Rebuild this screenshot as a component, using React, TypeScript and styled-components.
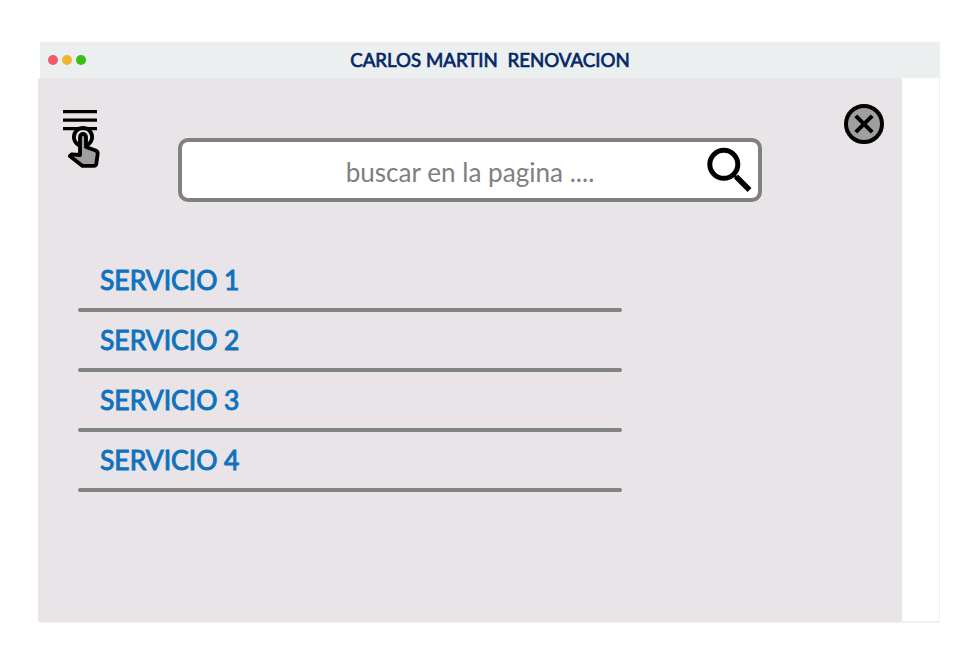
import React from "react";
import styled, { createGlobalStyle } from "styled-components";

const GlobalStyle = createGlobalStyle`
  * { box-sizing: border-box; }
  body { margin: 0; background: #fff; font-family: Lato, sans-serif; }
`;

const Page = styled.main`
  width: 980px;
  height: 669px;
  padding: 42px 40px 46px;
  overflow: hidden;
`;

const Window = styled.section`
  width: 900px;
  height: 581px;
  display: flex;
  flex-direction: column;
  background: #fff;
  border-radius: 2px;
  box-shadow: inset -1px -2px 0 #eff1f1;
`;

const TitleBar = styled.header`
  height: 36px;
  flex: none;
  display: grid;
  grid-template-columns: 60px 1fr 60px;
  align-items: center;
  background: #ebeff0;
`;

const Lights = styled.div`
  display: flex;
  gap: 4px;
  padding-left: 8px;
`;

const Light = styled.span<{ $color: string }>`
  width: 10px;
  height: 10px;
  border-radius: 50%;
  background: ${({ $color }) => $color};
`;

const Title = styled.h1`
  margin: 0;
  font-size: 19.2px;
  line-height: 24px;
  font-weight: 400;
  text-align: center;
  white-space: pre;
  color: #052767;
  -webkit-text-stroke: 0.7px #052767;
  transform: scaleX(0.975);
`;

const Panel = styled.div`
  width: 864px;
  height: 544px;
  margin-left: -2px;
  display: flex;
  flex-direction: column;
  background: #e8e4e8;
  border-radius: 2px;
`;

const Toolbar = styled.div`
  height: 172px;
  display: grid;
  grid-template-columns: 140px 584px 1fr;
  align-items: start;
`;

const IconButton = styled.button<{ $top: number; $left: number }>`
  display: block;
  margin: ${({ $top, $left }) => `${$top}px 0 0 ${$left}px`};
  padding: 0;
  border: 0;
  background: none;
  svg { display: block; }
`;

const Search = styled.div`
  height: 64px;
  margin-top: 60px;
  display: grid;
  grid-template-columns: 60px 1fr 60px;
  align-items: center;
  background: #fff;
  border: 4px solid #808080;
  border-radius: 10px;
`;

const Placeholder = styled.span`
  grid-column: 2;
  padding-top: 4px;
  font-size: 26.5px;
  line-height: 34px;
  text-align: center;
  white-space: nowrap;
  color: #808080;
  transform: scaleX(0.985);
`;

const Services = styled.ul`
  width: 544px;
  margin: 0 0 0 40px;
  padding: 0;
  list-style: none;
`;

const Service = styled.li`
  height: 60px;
  padding-top: 12px;

  &::after {
    content: "";
    display: block;
    height: 4px;
    margin-top: 10px;
    border-radius: 2px;
    background: #808382;
  }
`;

const ServiceName = styled.span`
  display: block;
  margin-left: 22px;
  font-size: 27px;
  line-height: 36px;
  color: #1071bd;
  -webkit-text-stroke: 1px #1071bd;
  transform: scaleX(0.98);
  transform-origin: left;
`;

const MenuIcon = () => (
  <svg width="40" height="62" viewBox="0 0 40 62" fill="none" stroke="#000">
    <path d="M3 4.6H37M3 13.1H37M3 21.6H37" strokeWidth="3.2" />
    <circle cx="23" cy="30" r="9.1" strokeWidth="3.8" />
    <path
      d="M20 48V30a3 3 0 0 1 6 0v10l9.7 3.5q2.2 1 2 3.3L36.3 56.7q-.3 2.2-2.5 2.2H22.5L9.8 48.9l2-1.6Z"
      fill="#a09ea0"
      strokeWidth="3.8"
      strokeLinejoin="round"
    />
  </svg>
);

const CloseIcon = () => (
  <svg width="40" height="40" viewBox="0 0 40 40" stroke="#000" strokeWidth="4">
    <circle cx="20" cy="20" r="18" fill="#a09ea0" />
    <path d="M11.8 11.8 28.2 28.2M28.2 11.8 11.8 28.2" />
  </svg>
);

const SearchIcon = () => (
  <svg width="46" height="46" viewBox="0 0 46 46" fill="none" stroke="#000" strokeWidth="5">
    <circle cx="17.8" cy="17.3" r="14" />
    <path d="M27.5 27.5 31 31" strokeWidth="2.5" />
    <path d="M30 29.5 43.5 43" strokeWidth="5.5" />
  </svg>
);

export default function App() {
  return (
    <Page>
      <GlobalStyle />
      <Window>
        <TitleBar>
          <Lights>
            <Light $color="#ef5b69" />
            <Light $color="#efb52e" />
            <Light $color="#3bbd1c" />
          </Lights>
          <Title>{"CARLOS MARTIN  RENOVACION"}</Title>
        </TitleBar>
        <Panel>
          <Toolbar>
            <IconButton $top={29} $left={22} aria-label="Menu"><MenuIcon /></IconButton>
            <Search>
              <Placeholder>buscar en la pagina ....</Placeholder>
              <IconButton $top={0} $left={8} aria-label="Buscar"><SearchIcon /></IconButton>
            </Search>
            <IconButton $top={26} $left={82} aria-label="Cerrar"><CloseIcon /></IconButton>
          </Toolbar>
          <Services>
            {[1, 2, 3, 4].map((n) => <Service key={n}><ServiceName>SERVICIO {n}</ServiceName></Service>)}
          </Services>
        </Panel>
      </Window>
    </Page>
  );
}
